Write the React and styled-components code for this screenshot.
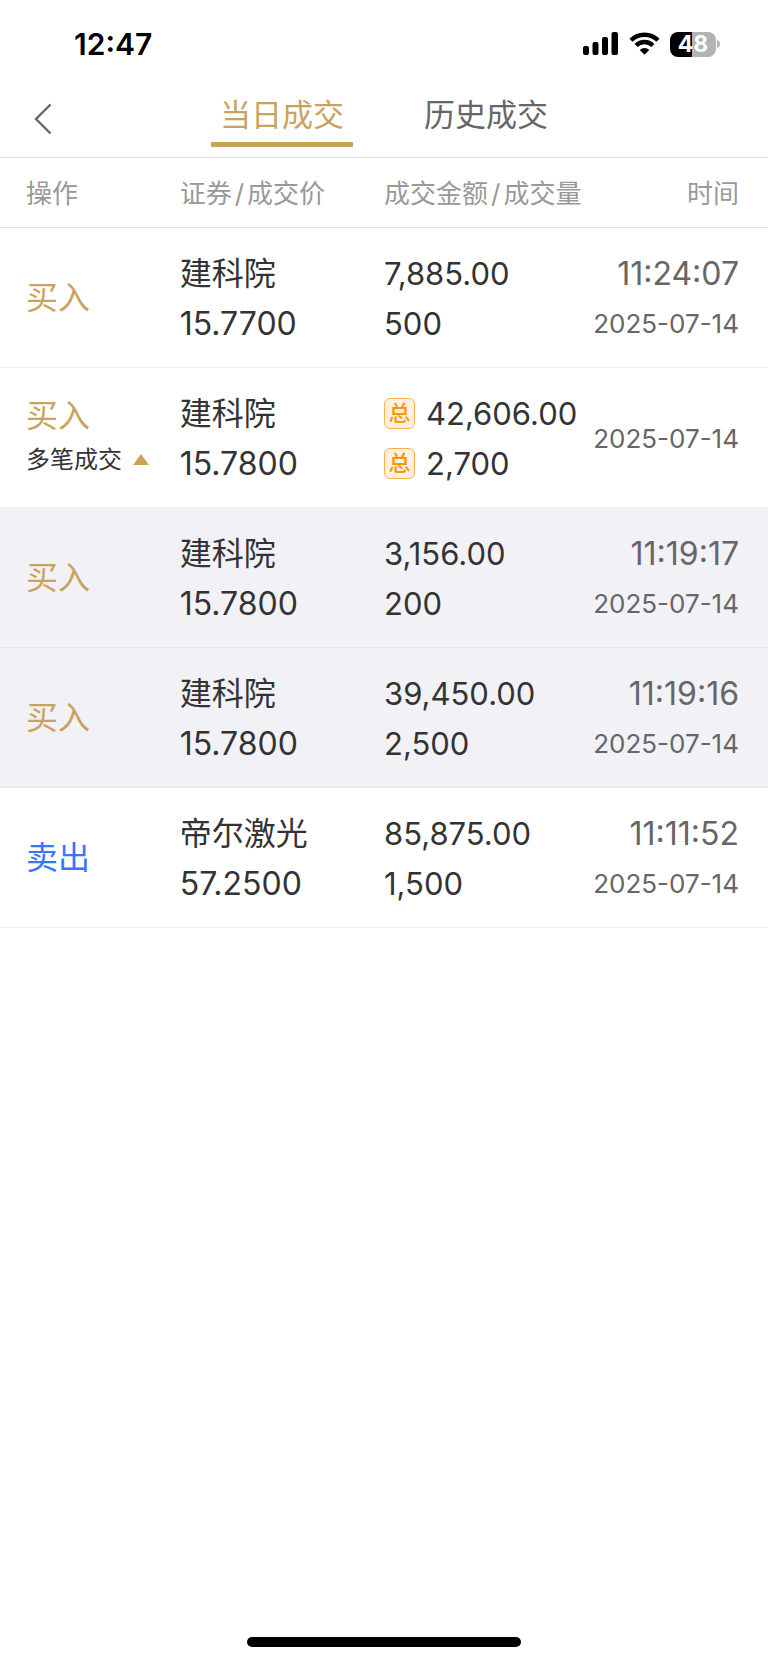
import React, { useState } from 'react';
import styled, { createGlobalStyle } from 'styled-components';

const GlobalStyle = createGlobalStyle`
  * {
    box-sizing: border-box;
  }

  body {
    margin: 0;
    background-color: #ffffff;
    font-family: Inter, 'Noto Sans CJK SC', sans-serif;
    color: #333333;
  }

  button {
    padding: 0;
    border: 0;
    background: none;
    font-family: inherit;
    cursor: pointer;
  }
`;

const Screen = styled.div`
  display: flex;
  flex-direction: column;
  min-height: 100vh;
`;

const StatusBar = styled.div`
  display: flex;
  align-items: center;
  justify-content: space-between;
  height: 88px;
  padding: 0 48px 0 74px;
`;

const Clock = styled.span`
  font-size: 30px;
  font-weight: 600;
  color: #000000;
`;

const StatusIcons = styled.div`
  display: flex;
  align-items: center;
  gap: 10px;
`;

const Battery = styled.div`
  display: flex;
  align-items: center;
  gap: 1px;
`;

const BatteryBody = styled.span`
  width: 46px;
  height: 25px;
  border-radius: 8px;
  background: linear-gradient(to right, #000000 48%, #b3b3b3 48%);
  color: #ffffff;
  font-size: 23px;
  font-weight: 700;
  line-height: 25px;
  text-align: center;
`;

const NavBar = styled.header`
  display: grid;
  grid-template-columns: 1fr auto 1fr;
  align-items: start;
  height: 70px;
  border-bottom: 1px solid #e0e0e0;
`;

const BackButton = styled.button`
  display: flex;
  align-items: center;
  width: 80px;
  height: 62px;
  padding-left: 33px;
`;

const Tabs = styled.nav`
  display: flex;
  gap: 62px;
`;

const Tab = styled.button`
  padding: 0 9px;
  border-bottom: 5px solid ${props => (props.$active ? '#c9a35c' : 'transparent')};
  color: ${props => (props.$active ? '#c9a35c' : '#666666')};
  font-size: 31px;
  line-height: 54px;
`;

const TradeTable = styled.table`
  width: 100%;
  table-layout: fixed;
  border-spacing: 0;
`;

const HeadCell = styled.th`
  width: ${props => props.$width};
  height: 70px;
  padding: ${props => (props.$first ? '0 0 2px 26px' : props.$last ? '0 29px 2px 0' : '0 0 2px')};
  border-bottom: 1px solid #e0e0e0;
  color: #999999;
  font-size: 26px;
  font-weight: 400;
  text-align: ${props => (props.$last ? 'right' : 'left')};
  white-space: nowrap;
`;

const Slash = styled.span`
  margin: 0 3px;
`;

const Row = styled.tr`
  background-color: ${props => (props.$detail ? '#f1f1f6' : '#ffffff')};
`;

const Cell = styled.td`
  height: 140px;
  padding: 2px 0 0;
  border-bottom: 1px solid ${props => (props.$detail ? '#e3e3e8' : '#f0f0f2')};
  vertical-align: middle;
  white-space: nowrap;
`;

const ActionCell = styled(Cell)`
  padding: 0 0 0 26px;
`;

const TimeCell = styled(Cell)`
  padding-right: 29px;
  color: #666666;
  text-align: right;
`;

const Action = styled.div`
  color: ${props => (props.$sell ? '#3478f6' : '#c9a35c')};
  font-size: 32px;
  line-height: 44px;
`;

const ExpandButton = styled.button`
  display: flex;
  align-items: center;
  gap: 11px;
  color: #333333;
  font-size: 24px;
  line-height: 44px;
`;

const Line = styled.div`
  font-size: 32px;
  line-height: 50px;
`;

const AmountLine = styled(Line)`
  display: flex;
  align-items: center;
  gap: 11px;
  font-size: 31px;
`;

const TradeDate = styled.div`
  font-size: 26px;
  line-height: 50px;
`;

const TotalBadge = styled.span`
  width: 31px;
  height: 31px;
  border: 1px solid #ffb14a;
  border-radius: 6px;
  background-color: #fff1e2;
  color: #ff9500;
  font-size: 22px;
  font-weight: 500;
  line-height: 29px;
  text-align: center;
`;

const HomeIndicator = styled.div`
  width: 274px;
  height: 10px;
  margin: auto auto 15px;
  border-radius: 5px;
  background-color: #000000;
`;

const trades = [
  { id: 1, name: '建科院', price: '15.7700', amount: '7,885.00', volume: '500', time: '11:24:07', date: '2025-07-14' },
  { id: 2, name: '建科院', price: '15.7800', amount: '42,606.00', volume: '2,700', date: '2025-07-14', total: true },
  { id: 3, name: '建科院', price: '15.7800', amount: '3,156.00', volume: '200', time: '11:19:17', date: '2025-07-14', detail: true },
  { id: 4, name: '建科院', price: '15.7800', amount: '39,450.00', volume: '2,500', time: '11:19:16', date: '2025-07-14', detail: true },
  { id: 5, name: '帝尔激光', price: '57.2500', amount: '85,875.00', volume: '1,500', time: '11:11:52', date: '2025-07-14', sell: true },
];

const SignalIcon = () => (
  <svg width="36" height="24" viewBox="0 0 36 24" aria-hidden="true">
    <rect x="0" y="14" width="6" height="9" rx="2" />
    <rect x="9.5" y="10" width="6" height="13" rx="2" />
    <rect x="19" y="5" width="6" height="18" rx="2" />
    <rect x="28.5" y="0" width="6.5" height="23" rx="2" />
  </svg>
);

const WifiIcon = () => (
  <svg width="31" height="24" viewBox="0 0 31 24" aria-hidden="true">
    <g fill="none" stroke="#000000" strokeWidth="4.4">
      <path d="M2 8.3 A19.2 19.2 0 0 1 29 8.3" />
      <path d="M7.1 13.5 A11.9 11.9 0 0 1 23.9 13.5" />
    </g>
    <path d="M15.5 22.7 L10.7 17.9 A6.9 6.9 0 0 1 20.3 17.9 Z" />
  </svg>
);

const TradeRow = ({ trade, expanded, onToggle }) => (
  <Row $detail={trade.detail}>
    <ActionCell $detail={trade.detail}>
      <Action $sell={trade.sell}>{trade.sell ? '卖出' : '买入'}</Action>
      {trade.total && (
        <ExpandButton type="button" aria-expanded={expanded} onClick={onToggle}>
          多笔成交
          <svg width="16" height="11" viewBox="0 0 16 11" aria-hidden="true">
            <path d={expanded ? 'M0 11 L8 0 L16 11 Z' : 'M0 0 L8 11 L16 0 Z'} fill="#c9a35c" />
          </svg>
        </ExpandButton>
      )}
    </ActionCell>
    <Cell $detail={trade.detail}>
      <Line>{trade.name}</Line>
      <Line>{trade.price}</Line>
    </Cell>
    <Cell $detail={trade.detail}>
      <AmountLine>
        {trade.total && <TotalBadge>总</TotalBadge>}
        {trade.amount}
      </AmountLine>
      <AmountLine>
        {trade.total && <TotalBadge>总</TotalBadge>}
        {trade.volume}
      </AmountLine>
    </Cell>
    <TimeCell $detail={trade.detail}>
      {trade.time && <Line>{trade.time}</Line>}
      <TradeDate>{trade.date}</TradeDate>
    </TimeCell>
  </Row>
);

const App = () => {
  const [tab, setTab] = useState('today');
  const [expanded, setExpanded] = useState(true);

  const visible = trades.filter(trade => expanded || !trade.detail);

  return (
    <Screen>
      <GlobalStyle />
      <StatusBar>
        <Clock>12:47</Clock>
        <StatusIcons>
          <SignalIcon />
          <WifiIcon />
          <Battery>
            <BatteryBody>48</BatteryBody>
            <svg width="3" height="8" viewBox="0 0 3 8" aria-hidden="true">
              <path d="M0 0 Q3 1 3 4 Q3 7 0 8 Z" fill="#b3b3b3" />
            </svg>
          </Battery>
        </StatusIcons>
      </StatusBar>

      <NavBar>
        <BackButton type="button" aria-label="返回">
          <svg width="20" height="32" viewBox="0 0 20 32" fill="none" aria-hidden="true">
            <path d="M17.5 1.5 L3 16 L17.5 30.5" stroke="#666666" strokeWidth="2.4" />
          </svg>
        </BackButton>
        <Tabs>
          <Tab type="button" $active={tab === 'today'} onClick={() => setTab('today')}>当日成交</Tab>
          <Tab type="button" $active={tab === 'history'} onClick={() => setTab('history')}>历史成交</Tab>
        </Tabs>
      </NavBar>

      <TradeTable>
        <thead>
          <tr>
            <HeadCell $first $width="23.4%">操作</HeadCell>
            <HeadCell $width="26.6%">证券<Slash>/</Slash>成交价</HeadCell>
            <HeadCell $width="26.6%">成交金额<Slash>/</Slash>成交量</HeadCell>
            <HeadCell $last $width="23.4%">时间</HeadCell>
          </tr>
        </thead>
        <tbody>
          {visible.map(trade => (
            <TradeRow
              key={trade.id}
              trade={trade}
              expanded={expanded}
              onToggle={() => setExpanded(!expanded)}
            />
          ))}
        </tbody>
      </TradeTable>

      <HomeIndicator />
    </Screen>
  );
};

export default App;
